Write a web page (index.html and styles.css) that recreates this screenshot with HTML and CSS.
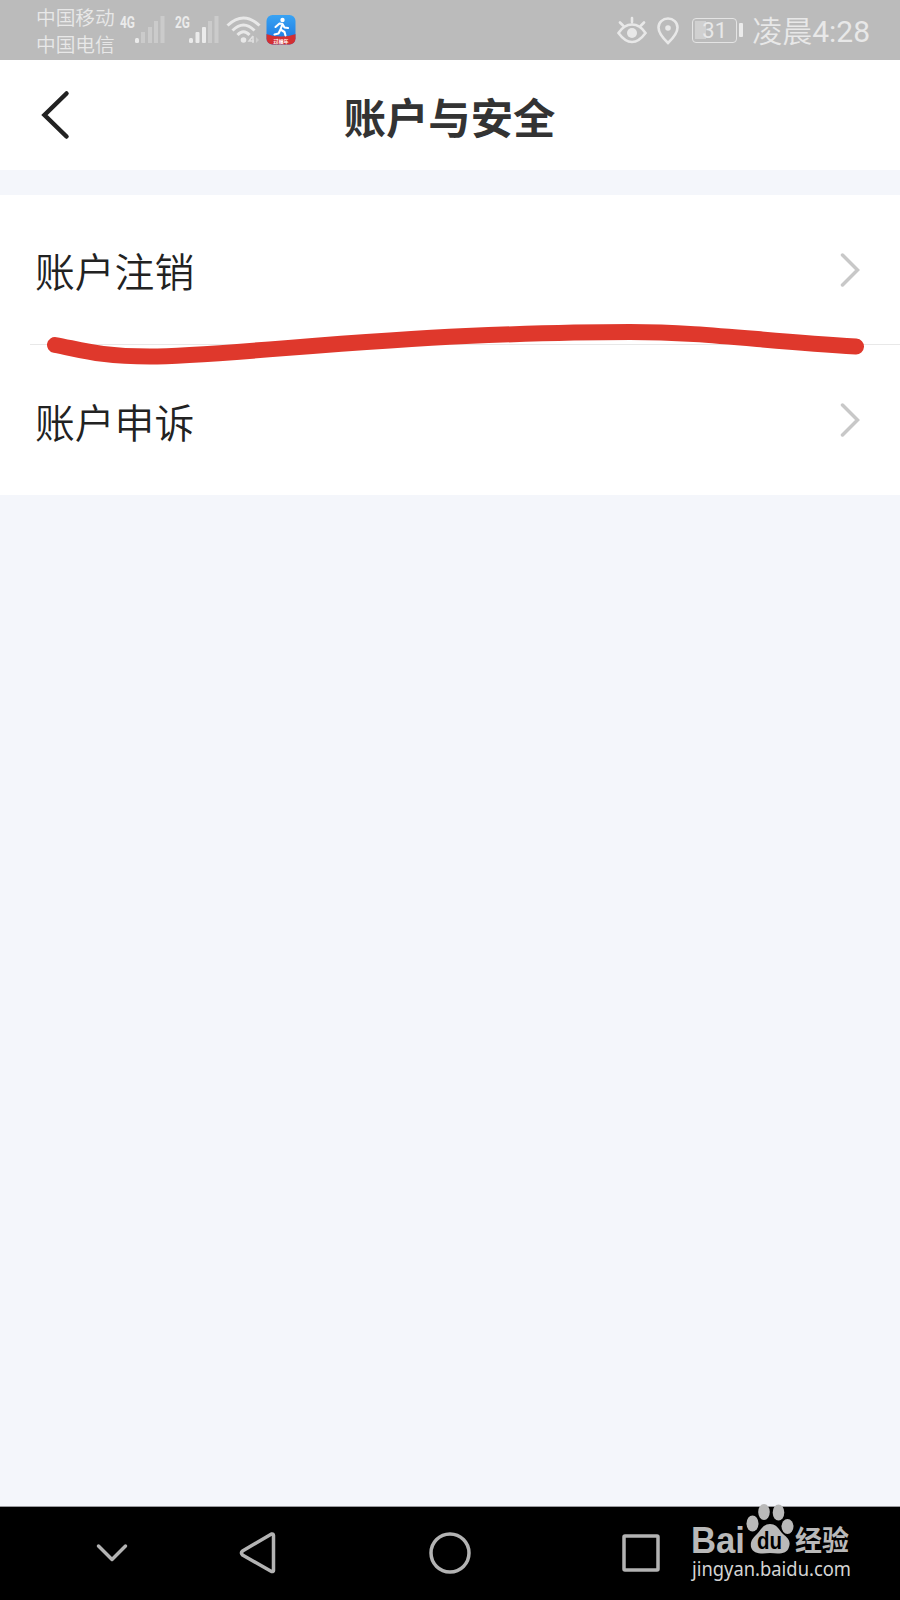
FILE: index.html
```html
<!doctype html>
<html lang="zh-CN">
	<head>
		<meta charset="UTF-8" />
		<meta name="viewport" content="width=device-width, initial-scale=1.0" />
		<title>账户与安全</title>
		<link rel="stylesheet" href="styles.css">
	</head>
	<body>
		<div class="status-bar">
			<div class="carriers">
				<div>中国移动</div>
				<div>中国电信</div>
			</div>
			<svg class="signal" width="46" height="30" viewBox="0 0 46 30">
				<text x="0" y="13" textLength="15" lengthAdjust="spacingAndGlyphs">4G</text>
				<rect x="15" y="23" width="4" height="5" rx="1.5" />
				<g class="dim">
					<rect x="21" y="17" width="4" height="11" />
					<rect x="28" y="12" width="4" height="16" />
					<rect x="34" y="6" width="4" height="22" />
					<rect x="40.500" y="1" width="4" height="27" />
				</g>
			</svg>
			<svg class="signal second" width="46" height="30" viewBox="0 0 46 30">
				<text x="0" y="13" textLength="15" lengthAdjust="spacingAndGlyphs">2G</text>
				<rect x="14" y="23" width="4" height="5" rx="1.5" />
				<rect x="20.500" y="17" width="4" height="11" rx="1" />
				<rect x="27" y="12" width="4" height="16" rx="1" />
				<g class="dim">
					<rect x="33" y="6" width="4" height="22" />
					<rect x="39.500" y="1" width="4" height="27" />
				</g>
			</svg>
			<svg class="wifi" width="36" height="30" viewBox="0 0 36 30">
				<g fill="none" stroke="#e8e8e8" stroke-width="3">
					<path d="M1.500 10.500Q17.500-4.500 33.500 10.500" />
					<path d="M6.500 15.500Q17.500 4.500 28.500 15.500" />
					<path d="M11.500 20Q17.500 13.500 23.500 20" />
				</g>
				<circle cx="17.500" cy="25" r="2.800" fill="#e8e8e8" />
				<path d="M27 21v7M27 21l-4 5h5" fill="none" stroke="#e0e0e0" stroke-width="1.500" />
				<path d="M30 22l3 3-3 3z" fill="#cecece" />
			</svg>
			<svg class="app-icon" width="30" height="30" viewBox="0 0 30 30">
				<defs>
					<clipPath id="app"><rect x=".5" y="0" width="29" height="29.500" rx="6" /></clipPath>
					<linearGradient id="sky" x2="0" y2="1">
						<stop offset="0" stop-color="#39a3f3" />
						<stop offset="1" stop-color="#1873df" />
					</linearGradient>
				</defs>
				<g clip-path="url(#app)">
					<rect width="30" height="30" fill="url(#sky)" />
					<path d="M0 19Q15 24 30 19V30H0z" fill="#d32f32" />
				</g>
				<circle cx="16.500" cy="5" r="2.200" fill="#fff" />
				<path d="M9.500 12l4-3.500 3 .5-2 5.500 4 2.500 1 3.500M14.500 14.500l-2 4-4 1M16.500 9l2 3.500 3.500.5" fill="none" stroke="#fff" stroke-width="2.100" stroke-linecap="round" stroke-linejoin="round" />
				<text x="7.500" y="27.500">过福年</text>
			</svg>

			<div class="status-right">
				<svg width="30" height="30" viewBox="0 0 30 30" fill="none" stroke="#e8e8e8" stroke-width="2.600" stroke-linecap="round">
					<path d="M1.500 18Q7 9.500 15 9.500T28.500 18Q22 27 15 27T1.500 18zM15 7V3M6 10.500L3 7.500M24 10.500l3-3" />
					<circle cx="15" cy="18" r="5" fill="#e8e8e8" stroke="none" />
				</svg>
				<svg class="pin" width="22" height="30" viewBox="0 0 22 30">
					<path d="M11 28Q1.500 19 1.500 12.500a9.500 9 0 0 1 19 0Q20.500 19 11 28z" fill="none" stroke="#e8e8e8" stroke-width="2.600" />
					<circle cx="11" cy="13" r="2.800" fill="#e8e8e8" />
				</svg>
				<div class="battery"><span>31</span></div>
				<div class="battery-cap"></div>
				<div class="clock">凌晨<span>4:28</span></div>
			</div>
		</div>

		<header>
			<svg class="back" width="30" height="50" viewBox="0 0 30 50">
				<path d="M26.500 3.500L4.500 25l22 21.500" />
			</svg>
			<h1>账户与安全</h1>
		</header>

		<main>
			<div class="list">
				<a class="row">
					<span>账户注销</span>
					<svg width="20" height="34" viewBox="0 0 20 34"><path d="M2.500 2L17.500 17l-15 15" /></svg>
				</a>
				<div class="divider"></div>
				<a class="row">
					<span>账户申诉</span>
					<svg width="20" height="34" viewBox="0 0 20 34"><path d="M2.500 2L17.500 17l-15 15" /></svg>
				</a>
				<!-- hand drawn marker over the divider -->
				<svg class="marker" width="900" height="60" viewBox="0 315 900 60">
					<path d="M55 345C82 350 100 356.500 150 356.500C210 356.500 340 341.500 466 336C540 333 580 332 630 332C705 332 760 341 856 346.500" />
				</svg>
			</div>
		</main>

		<footer>
			<svg class="nav-down" width="32" height="20" viewBox="0 0 32 20"><path d="M2.500 3L16 16.500 29.500 3" /></svg>
			<svg class="nav-back" width="38" height="44" viewBox="0 0 38 44"><path d="M35.500 4.500v35q0 1.500-2 1L4.500 24q-2-2 0-4L33.500 3q2-.5 2 1.500z" /></svg>
			<svg class="nav-home" width="42" height="42" viewBox="0 0 42 42"><circle cx="21" cy="21" r="19" /></svg>
			<svg class="nav-recent" width="38" height="38" viewBox="0 0 38 38"><rect x="2" y="2" width="34" height="34" rx="1" /></svg>
			<svg class="watermark" width="170" height="90" viewBox="0 0 170 90">
				<text class="brand" x="-1" y="50" textLength="54" lengthAdjust="spacingAndGlyphs">Bai</text>
				<ellipse cx="60.500" cy="20.500" rx="6" ry="8" />
				<ellipse cx="72" cy="9" rx="5.800" ry="8" />
				<ellipse cx="86.500" cy="9.500" rx="5.800" ry="8" />
				<ellipse cx="95.500" cy="23.500" rx="6" ry="7.500" />
				<path d="M78 21c7 0 9 6 13 10 5 4 8 7 6 13-2 7-9 7-19 6-9 1-17 1-19-6-1-6 2-9 6-13 4-4 6-10 13-10z" />
				<text class="du" x="65" y="46" textLength="25" lengthAdjust="spacingAndGlyphs">du</text>
				<text class="jy" x="103" y="48" textLength="54" lengthAdjust="spacingAndGlyphs">经验</text>
				<text class="url" x="0" y="73" textLength="159" lengthAdjust="spacingAndGlyphs">jingyan.baidu.com</text>
			</svg>
		</footer>
	</body>
</html>
```
FILE: styles.css
```css
* {
	box-sizing: border-box;
}

body {
	margin: 0;
	width: 900px;
	height: 1600px;
	display: flex;
	flex-direction: column;
	background: #f4f6fb;
	font-family: Roboto, "Noto Sans CJK SC", sans-serif;
	overflow: hidden;
}

svg {
	display: block;
	flex: none;
}

.status-bar {
	height: 60px;
	flex: none;
	display: flex;
	align-items: center;
	padding: 0 30px 0 36px;
	background: #bbb;
	color: #e8e8e8;
}

.carriers {
	width: 84px;
	padding-top: 4px;
	font-size: 19.7px;
	font-weight: 350;
	line-height: 27px;
	white-space: nowrap;
}

.signal {
	fill: #ebebeb;
	overflow: visible;
}

.signal text {
	font-size: 17px;
	font-weight: bold;
}

.signal .dim {
	fill: #cbcbcb;
}

.signal.second {
	margin-left: 9px;
}

.wifi {
	margin-left: 5px;
}

.app-icon {
	margin-left: 4px;
}

.app-icon text {
	font-size: 5px;
	font-weight: bold;
	fill: #fff;
}

.status-right {
	margin-left: auto;
	display: flex;
	align-items: center;
}

.pin {
	margin-left: 10px;
}

.battery {
	width: 45px;
	height: 25px;
	margin-left: 13px;
	border: 1.5px solid #e4e4e4;
	border-radius: 4px;
	font-size: 22px;
	line-height: 24px;
	text-align: center;
	background: linear-gradient(#d0d0d0, #d0d0d0) 2px 2px / 11px 18px no-repeat;
}

.battery-cap {
	width: 4px;
	height: 14px;
	margin-left: 2px;
	border-radius: 1px;
	background: #ebebeb;
}

.clock {
	margin: -2px 0 0 9px;
	font-size: 30px;
	font-weight: 350;
	white-space: nowrap;
}

.clock span {
	font-weight: 400;
}

header {
	height: 110px;
	flex: none;
	display: flex;
	align-items: center;
	background: #fff;
}

.back {
	margin-left: 40px;
	fill: none;
	stroke: #222;
	stroke-width: 4.5;
	stroke-linecap: round;
}

h1 {
	flex: 1;
	margin: 9px 71px 0 0;
	text-align: center;
	font-size: 42.3px;
	font-weight: bold;
	line-height: 60px;
	color: #333;
}

main {
	flex: 1;
	padding-top: 25px;
}

.list {
	position: relative;
	background: #fff;
}

.row {
	height: 149px;
	display: flex;
	align-items: center;
	justify-content: space-between;
	padding: 0 40px 0 35px;
	font-size: 39.8px;
	font-weight: 350;
	color: #222;
}

.divider + .row {
	height: 150px;
}

.row svg {
	fill: none;
	stroke: #c8c8c8;
	stroke-width: 3.5;
	stroke-linecap: round;
}

.divider {
	height: 1px;
	margin-left: 30px;
	background: #e8e8e8;
}

.marker {
	position: absolute;
	top: 120px;
	left: 0;
	fill: none;
	stroke: #df382c;
	stroke-width: 16;
	stroke-linecap: round;
}

footer {
	height: 94px;
	flex: none;
	display: flex;
	align-items: center;
	border-top: 1px solid #9b9b9f;
	background: #000;
	fill: none;
	stroke: #b3b3b3;
	stroke-width: 3.5;
	stroke-linecap: round;
	stroke-linejoin: round;
}

.nav-down {
	margin: -2px 0 0 96px;
}

.nav-back {
	margin: -1px 0 0 110px;
}

.nav-home {
	margin: -1px 0 0 153px;
}

.nav-recent {
	margin: -1px 0 0 151px;
}

.watermark {
	margin: -11px 0 0 32px;
	overflow: visible;
	fill: #b9b9b9;
	stroke: none;
}

.brand {
	font: bold 37px "Liberation Sans", sans-serif;
}

.du {
	font: bold 23px "Liberation Sans", sans-serif;
	fill: #000;
}

.jy {
	font: bold 28px "Noto Sans CJK SC", sans-serif;
}

.url {
	font: 20px "Noto Sans", sans-serif;
	fill: #d4d4d4;
}
```
